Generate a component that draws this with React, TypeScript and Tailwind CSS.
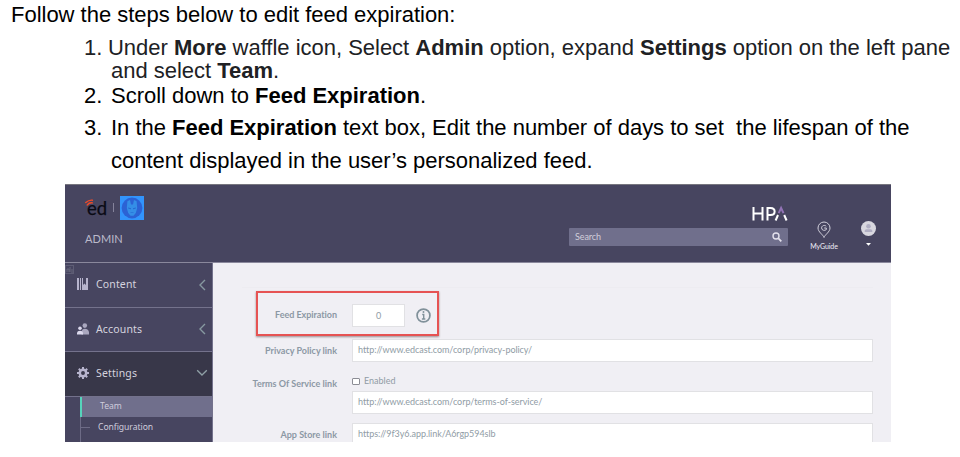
import type { ReactNode } from "react";

function Brand() {
  return (
    <div className="flex h-[25px] items-center">
      <div className="relative h-[25px] w-[29px]">
        <svg className="absolute left-[1px] top-[4px]" width="12" height="9" viewBox="0 0 12 9" fill="none" stroke="#f04b29" strokeWidth="1.4" strokeLinecap="round">
          <path d="M0.8 3.6 C3 1.6 5 .8 7.4 1.2" />
          <path d="M2.2 6 C3.7 4.2 5.4 3.5 7.4 3.9" />
        </svg>
        <span className="absolute left-[3px] top-[3px] font-['Lato',sans-serif] text-[18.5px] leading-[20px] text-[#0a0a14] [-webkit-text-stroke:0.25px_#0a0a14]">ed</span>
      </div>
      <span className="h-[9px] w-px bg-[#85839b]" />
      <svg className="ml-[6px]" width="24" height="24" viewBox="0 0 24 24">
        <rect width="24" height="24" fill="#3294fc" />
        <circle cx="12" cy="12" r="10.4" fill="#2b62d4" />
        <path d="M7.4 5.2 L10 4 L11 8.5 H13 L14 4 L16.6 5.2 L17.2 12 L15.8 17 L13.5 19.8 H10.5 L8.2 17 L6.8 12Z" fill="#348ee7" />
        <path d="M8.2 12 L11 12.8 M15.8 12 L13 12.8" stroke="#2466cf" fill="none" />
        <path d="M10.5 16.5H13.5" stroke="#2b78db" fill="none" />
      </svg>
    </div>
  );
}

function Header() {
  return (
    <header className="flex h-[79px] border-y border-b-[#8a889c] border-t-[#77767f] bg-[#474560]">
      <div className="w-[504px] pl-[19px] pt-[10px]">
        <Brand />
        <div className="ml-px mt-[12px] font-['Lato',sans-serif] text-[11px] leading-[14px] tracking-[0.05px] text-[#bbb9ca]">ADMIN</div>
      </div>
      <div className="w-[219px] pt-[19px]">
        <div className="flex h-[19px] justify-end">
          <svg width="36" height="19" viewBox="0 0 36 19" fill="none" stroke="#fff" strokeWidth="2">
            <path d="M1.5 3V16.5M10.5 3V16.5M1.5 9.6H10.5M15.5 16.5V4H18.5C24 4 24 11 18.5 11H15.5" />
            <path d="M23.6 16.5L26 11M34.6 16.5L32.2 11" />
            <path d="M26.7 9.2L29.1 4L31.5 9.2" stroke="#9273b5" />
          </svg>
        </div>
        <div className="mt-[5px] flex h-[18px] items-center justify-between rounded-[1px] bg-[#706f8c] pl-[6px] pr-[6px]">
          <span className="font-['Lato',sans-serif] text-[9px] leading-[12px] tracking-[-0.1px] text-[#d0ceda]">Search</span>
          <svg width="10" height="10" viewBox="0 0 10 10" fill="none" stroke="#e3e1ec" strokeWidth="1.4">
            <circle cx="4" cy="4" r="3" />
            <path d="M6.2 6.2L9.3 9.3" strokeWidth="1.8" />
          </svg>
        </div>
      </div>
      <div className="ml-[21px] flex w-[30px] flex-col items-center pt-[36px]">
        <svg width="14" height="18" viewBox="0 0 14 18" fill="none" stroke="#d2d0dc">
          <path d="M7 16.5C6 13.5 1 11 1 7A6 6 0 0 1 13 7C13 11 8 13.5 7 16.5Z" />
          <path d="M9.2 5.2C7.6 3.7 4.6 4.5 4.6 7S7.8 10 9.3 8.6V7H7.2" />
        </svg>
        <span className="mt-[2px] font-['Lato',sans-serif] text-[7px] leading-[10px] tracking-[-0.1px] text-[#f0eef8]">MyGuide</span>
      </div>
      <div className="ml-[22px] flex w-[15px] flex-col items-center pt-[36px]">
        <svg width="15" height="15" viewBox="0 0 15 15">
          <circle cx="7.5" cy="7.5" r="7.5" fill="#d8d7df" />
          <circle cx="7.5" cy="5.3" r="2.3" fill="#b0aec3" />
          <path d="M3.7 11V9.7Q3.7 8.2 5.5 8.2H9.5Q11.3 8.2 11.3 9.7V11Z" fill="#b0aec3" />
        </svg>
        <svg className="mt-[7px]" width="5" height="3" viewBox="0 0 5 3"><path d="M0 0H5L2.5 2.8Z" fill="#fff" /></svg>
      </div>
    </header>
  );
}

function Chevron({ open = false }: { open?: boolean }) {
  return (
    <span className="ml-auto flex w-[12px] items-center justify-center">
      {open ? (
        <svg width="12" height="8" viewBox="0 0 12 8" fill="none" stroke="#8fa0a6" strokeWidth="1.3"><path d="M1.2 1.2L6 6L10.8 1.2" /></svg>
      ) : (
        <svg className="mt-px" width="7" height="12" viewBox="0 0 7 12" fill="none" stroke="#8799a0" strokeWidth="1.4"><path d="M6 1L1 6L6 11" /></svg>
      )}
    </span>
  );
}

function MenuText({ children }: { children: ReactNode }) {
  return <span className="ml-[8px] font-['Noto_Sans',sans-serif] text-[10.5px] leading-[14px] tracking-[0.15px] text-[#d5d3df]">{children}</span>;
}

function Sidebar() {
  return (
    <nav className="h-[179px] w-[148px] overflow-hidden border-r border-[#74728c] bg-[#474560]">
      <div className="relative flex h-[45px] items-center border-b border-[#74728c] pb-[2px] pl-[12px] pr-[4px]">
        <svg className="absolute left-0 top-[2px]" width="9" height="9" viewBox="0 0 9 9" fill="none" stroke="#77768b">
          <rect x=".5" y=".5" width="8" height="8" strokeDasharray="1 1" />
          <path d="M2 7V4H4V7M5 2V7M7 4V8" strokeWidth=".7" />
        </svg>
        <svg width="11" height="12" viewBox="0 0 11 12" fill="#b7b4cd"><path d="M0 0H2V12H0ZM3 0H4V12H3ZM5 0H6V7L7.5 5.5L9 7V0H11V12H5Z" /></svg>
        <MenuText>Content</MenuText>
        <Chevron />
      </div>
      <div className="flex h-[44px] items-center border-b border-[#74728c] pb-[2px] pl-[12px] pr-[4px]">
        <svg width="12" height="12" viewBox="0 0 12 12">
          <circle cx="7.8" cy="2.6" r="2.3" fill="#aaa7bf" /><path d="M4.5 11.5V9Q5 5.8 7.8 5.8Q11 5.8 12 9V11.5Z" fill="#aaa7bf" />
          <circle cx="3" cy="5.2" r="1.8" fill="#dcd9ed" /><path d="M0 11.5V9.7Q.3 7.7 3 7.7Q5.7 7.7 6 9.7V11.5Z" fill="#dcd9ed" />
        </svg>
        <span className="-ml-px flex"><MenuText>Accounts</MenuText></span>
        <Chevron />
      </div>
      <div className="flex h-[45px] items-center border-b border-[#74728c] bg-[#383749] pb-[3px] pl-[12px] pr-[4px]">
        <svg width="12" height="12" viewBox="0 0 12 12">
          <circle cx="6" cy="6" r="3.2" fill="none" stroke="#b7b4cd" strokeWidth="2.5" />
          <path d="M6 0V3M6 9V12M0 6H3M9 6H12M1.8 1.8L3.5 3.5M8.5 8.5L10.2 10.2M10.2 1.8L8.5 3.5M3.5 8.5L1.8 10.2" stroke="#b7b4cd" strokeWidth="2" />
        </svg>
        <span className="-ml-px flex"><MenuText>Settings</MenuText></span>
        <Chevron open />
      </div>
      <div className="ml-[15px] h-[45px] border-l border-[#6d6b86] font-['Noto_Sans',sans-serif] text-[8.6px] leading-[19px] tracking-[-0.05px] text-[#cfccdc]">
        <div className="-ml-px h-[20px] border-l-2 border-[#56d4bb] bg-[#706f8c] pl-[18px]">Team</div>
        <div className="flex h-[20px] items-center"><span className="h-px w-[9px] bg-[#6d6b86]" /><span className="ml-[8px]">Configuration</span></div>
      </div>
    </nav>
  );
}

function Label({ children }: { children: ReactNode }) {
  return <span className="w-[124px] text-right font-bold leading-[12px] text-[#8c98a4]">{children}</span>;
}

function LinkBox({ children }: { children: ReactNode }) {
  return <span className="ml-[15px] flex h-[23px] w-[521px] items-center border border-[#e1e1e4] bg-white pb-px pl-[5px] tracking-[-0.055px]">{children}</span>;
}

function Form() {
  return (
    <main className="h-[179px] flex-1 overflow-hidden bg-[#f0eff4] font-['Lato',sans-serif] text-[9px] leading-[12px] text-[#909ca5]">
      <div className="ml-[29px] mt-[24px] w-[631px] border-t border-[#edecf1]" />
      <div className="ml-[43px] mt-[3px] flex h-[45px] w-[183px] items-center border-2 border-[#e65353] pt-[4px] shadow-[0_1px_2px_#9b8b90]">
        <span className="flex w-[79px] justify-end pb-px font-bold tracking-[-0.04px] text-[#8c98a4]">Feed Expiration</span>
        <span className="ml-[15px] flex h-[23px] w-[53px] items-center justify-center border border-[#e1e1e4] bg-white">0</span>
        <svg className="ml-[11px]" width="15" height="15" viewBox="0 0 14 14" fill="none" stroke="#80919a">
          <circle cx="7" cy="7" r="6" strokeWidth="1.6" /><path d="M5.8 6H7.2V10M5.5 10.2H8.7" strokeWidth="1.3" /><circle cx="7" cy="3.8" r=".4" />
        </svg>
      </div>
      <div className="mt-[3px] flex h-[23px] items-center"><Label>Privacy Policy link</Label><LinkBox>http://www.edcast.com/corp/privacy-policy/</LinkBox></div>
      <div className="mt-[12px] flex h-[14px] items-center">
        <span className="flex pt-[6px]"><Label>Terms Of Service link</Label></span>
        <span className="ml-[15px] h-[7px] w-[8px] rounded-[1px] border border-[#8c8d95] bg-white" />
        <span className="ml-[4px] pb-px">Enabled</span>
      </div>
      <div className="mt-[3px] flex pl-[124px]"><LinkBox>http://www.edcast.com/corp/terms-of-service/</LinkBox></div>
      <div className="mt-[9px] flex h-[23px] items-center"><Label>App Store link</Label><LinkBox>https://9f3y6.app.link/A6rgp594slb</LinkBox></div>
    </main>
  );
}

export default function App() {
  return (
    <div className="h-[457px] w-[960px] overflow-hidden bg-white font-['Liberation_Sans',Arial,sans-serif] text-[22px] tracking-[-0.015px] text-black">
      <div className="h-[184px] whitespace-pre">
        <p className="pl-[11px] pt-[3px] leading-[24px]">Follow the steps below to edit feed expiration:</p>
        <ol className="mt-[9px] pl-[84px]">
          <li className="flex leading-[23px] text-[#202124]"><span className="w-[24px]">1.</span><span>Under <b>More</b> waffle icon, Select <b>Admin</b> option, expand <b>Settings</b> option on the left pane<br /><span className="ml-[3px]">and select <b>Team</b>.</span></span></li>
          <li className="mt-px flex leading-[25px]"><span className="w-[27px]">2.</span><span>Scroll down to <b>Feed Expiration</b>.</span></li>
          <li className="mt-[3px] flex leading-[33px]"><span className="w-[27px]">3.</span><span>In the <b>Feed Expiration</b> text box, Edit the number of days to set  the lifespan of the<br />content displayed in the user’s personalized feed.</span></li>
        </ol>
      </div>
      <section className="ml-[65px] h-[258px] w-[826px] overflow-hidden tracking-normal">
        <Header />
        <div className="flex"><Sidebar /><Form /></div>
      </section>
    </div>
  );
}
